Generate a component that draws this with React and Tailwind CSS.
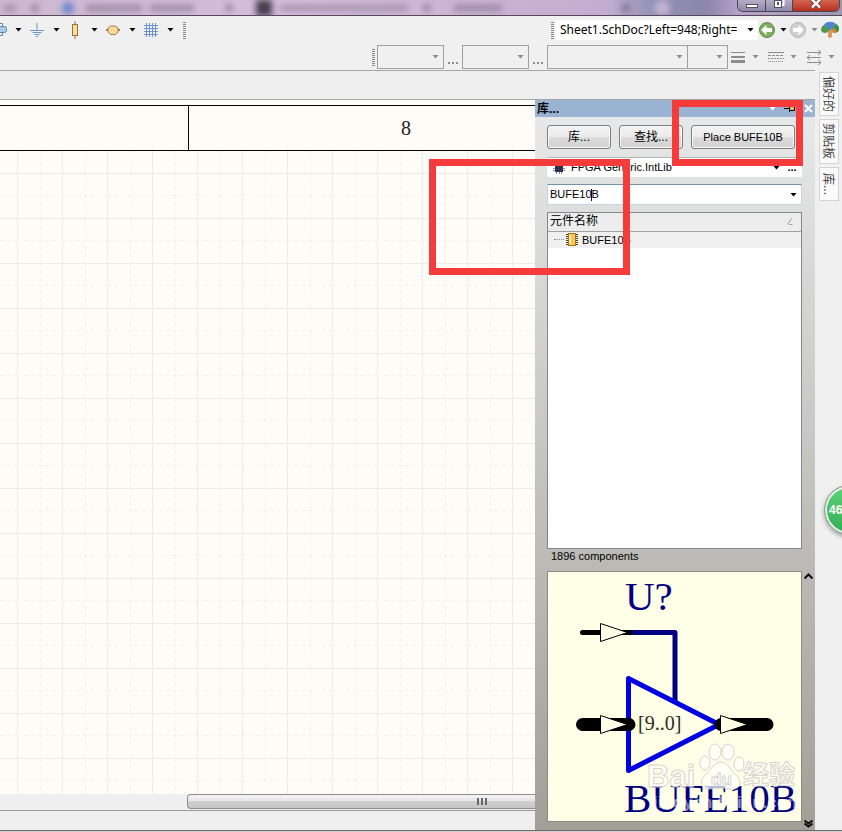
import React, { useState } from 'react';

const Caret = ({ className = 'text-black' }) => (
  <svg className={`shrink-0 ${className}`} width="7" height="4" viewBox="0 0 7 4" fill="currentColor" aria-hidden="true">
    <path d="M0.5 0h6L3.5 3.6z" />
  </svg>
);

const Grip = () => (
  <div className="w-[3px] h-[17px] shrink-0 bg-[repeating-linear-gradient(to_bottom,#8a8a8a_0,#8a8a8a_1px,transparent_1px,transparent_2px)]" />
);

const PortIcon = () => (
  <svg width="16" height="16" viewBox="0 0 16 16" fill="none" stroke="#5f87ad">
    <path d="M5.5 5V1.5h6V5M5.500 10v3.500h6V10" fill="#eef5fb" />
    <rect x="1.500" y="4.500" width="14" height="6" rx="2" fill="#a9cbe8" />
  </svg>
);

const GroundIcon = () => (
  <svg width="16" height="16" viewBox="0 0 16 16" stroke="#6c96c8">
    <path d="M8 1v7.500M1 8.500h14M3.500 10.500h9M5.500 12.500h5M7 14.500h2" />
  </svg>
);

const ResistorIcon = () => (
  <svg width="16" height="18" viewBox="0 0 16 18" stroke="#96743c">
    <path d="M8 0v18" />
    <rect x="5.500" y="3.500" width="5" height="11" fill="#fbdc9b" />
  </svg>
);

const PartIcon = () => (
  <svg width="16" height="16" viewBox="0 0 16 16" stroke="#9a8457">
    <path d="M1 8h14" strokeWidth="2" />
    <path d="M5.500 4h5L13 6v4l-2.500 2.500h-5L3 10V6z" fill="#fbd893" />
  </svg>
);

const GridIcon = () => (
  <svg width="16" height="16" viewBox="0 0 16 16" stroke="#6d93c9">
    <path d="M3.500 1v14M6.500 1v14M9.500 1v14M12.500 1v14M1 3.500h14M1 6.500h14M1 9.500h14M1 12.500h14" />
  </svg>
);

const drawTools = [
  { name: 'Port', icon: <PortIcon /> },
  { name: 'Power', icon: <GroundIcon /> },
  { name: 'Resistor', icon: <ResistorIcon /> },
  { name: 'Part', icon: <PartIcon /> },
  { name: 'Grid', icon: <GridIcon /> },
];

const Arrow = ({ dir, color, ring }) => (
  <svg width="18" height="18" viewBox="0 0 18 18" aria-hidden="true">
    <circle cx="9" cy="9" r="7.500" fill={color} stroke={ring} />
    <path
      d={dir === 'left' ? 'M3 9l5.500-5v3H14v4H8.500v3z' : 'M15 9L9.500 4v3H4v4h5.500v3z'}
      fill="#fff"
    />
  </svg>
);

function TitleBar() {
  return (
    <header className="relative h-4 overflow-hidden border-b border-[#55485a] bg-[linear-gradient(to_right,#cdb8cf_0%,#d3bddb_35%,#c3add0_72%,#8f8fb5_78%,#8d86ad_84%,#b9a4c9_88%,#9c97ae_100%)]">
      <div className="flex h-full items-center blur-[3px]" aria-hidden="true">
        <span className="ml-1 h-1.5 w-3 bg-[#9c8da3]" />
        <span className="ml-4 size-1.5 bg-[#857390]" />
        <span className="ml-6 size-3 rounded-full bg-[#6583cf]" />
        <span className="ml-3 h-1.5 w-14 bg-[#9886a0]" />
        <span className="ml-2 h-1.5 w-11 bg-[#9886a0]" />
        <span className="ml-8 size-1.5 bg-[#857390]" />
        <span className="ml-6 size-4 bg-[#463d4b]" />
        <span className="ml-2 h-1.5 w-32 bg-[#a590ad]" />
        <span className="ml-4 size-1.5 bg-[#857390]" />
        <span className="ml-6 h-1.5 w-12 bg-[#9784a2]" />
        <span className="ml-30 size-2 bg-[#857390]" />
        <span className="ml-6 size-4 rounded-full bg-[#c2b3cf]" />
      </div>
      <div className="absolute right-0.5 top-0 flex h-3 overflow-hidden rounded-b-md border border-t-0 border-[#4c4558]">
        <button aria-label="Minimize" className="flex w-7 items-center justify-center border-r border-[#4c4558] bg-linear-to-b from-[#b4aec4] to-[#8d88a5]">
          <span className="h-1 w-3 border border-[#55506a] bg-white" />
        </button>
        <button aria-label="Restore" className="flex w-[27px] items-start justify-center border-r border-[#4c4558] bg-linear-to-b from-[#b4aec4] to-[#8d88a5]">
          <svg width="12" height="9" viewBox="0 0 12 9" fill="none">
            <path d="M4.500 0v-1h6v6h-2" stroke="#fff" strokeWidth="2" />
            <rect x="1.500" y="0.500" width="7" height="7" fill="#fff" stroke="#55506a" />
            <rect x="4" y="2" width="2" height="3" fill="#55506a" />
          </svg>
        </button>
        <button aria-label="Close" className="flex w-[46px] items-start justify-center bg-linear-to-b from-[#d0654f] to-[#b82c1c]">
          <svg width="12" height="9" viewBox="0 0 12 9">
            <path d="M1.500-1L10 7.500M10.500-1L2 7.500" stroke="#5d3038" strokeWidth="4" />
            <path d="M1.500-1L10 7.500M10.500-1L2 7.500" stroke="#fff" strokeWidth="2.500" />
          </svg>
        </button>
      </div>
    </header>
  );
}

function MainToolbar() {
  const [path, setPath] = useState('Sheet1.SchDoc?Left=948;Right=');
  return (
    <div className="flex h-7 items-center justify-between">
      <div className="-ml-[11px] flex items-center">
        {drawTools.map((tool) => (
          <button key={tool.name} aria-label={tool.name} className="flex w-[38px] items-center">
            <span className="flex w-5 justify-center">{tool.icon}</span>
            <span className="flex w-[18px] justify-center"><Caret /></span>
          </button>
        ))}
        <div className="ml-1"><Grip /></div>
      </div>
      <div className="flex items-center pr-0.5">
        <Grip />
        <label className="ml-0.5 flex h-5 items-center bg-white pl-1">
          <input
            aria-label="Document address"
            value={path}
            onChange={(e) => setPath(e.target.value)}
            className="w-[182px] bg-transparent font-['Noto_Sans',sans-serif] text-[12px] text-black outline-none"
          />
          <span className="flex w-4 justify-center"><Caret /></span>
        </label>
        <button aria-label="Back" className="flex items-center gap-1">
          <Arrow dir="left" color="#7fae5c" ring="#5c8a48" />
          <Caret />
        </button>
        <button aria-label="Forward" className="ml-0.5 flex items-center gap-1">
          <Arrow dir="right" color="#cfcfcf" ring="#b5b5b5" />
          <Caret className="text-[#8c8c8c]" />
        </button>
        <button aria-label="Navigate" className="ml-0.5 flex">
          <svg width="20" height="18" viewBox="0 0 20 18">
            <path d="M8 8h4v8l-2 1-2-1z" fill="#d79a5c" />
            <path d="M1 9c0-4 3-6 7-5l2 5-4 3c-3 0-5-1-5-3z" fill="#4f9a4b" />
            <path d="M4 4c2-4 9-4 12-1l-3 6-4-1z" fill="#4d86cf" />
            <path d="M12 8l4-5c3 1 4 5 2 8l-4 1z" fill="#3a9443" />
            <path d="M11 9l3-2 3 4-4 1z" fill="#d9803f" />
          </svg>
        </button>
      </div>
    </div>
  );
}

const Combo = ({ label, className }) => (
  <label className={`relative flex h-6 items-center justify-end border border-[#a0a0a0] ${className}`}>
    <select aria-label={label} className="absolute inset-0 size-full appearance-none bg-transparent">
      <option></option>
    </select>
    <span className="pr-1"><Caret className="text-[#8c8c8c]" /></span>
  </label>
);

const More = () => (
  <button aria-label="More" className="flex h-6 w-[18px] items-end justify-center gap-0.5 pb-[5px]">
    <i className="size-0.5 bg-[#8c8c8c]" />
    <i className="size-0.5 bg-[#8c8c8c]" />
    <i className="size-0.5 bg-[#8c8c8c]" />
  </button>
);

function FormatToolbar() {
  return (
    <div className="flex h-[26px] items-center justify-end overflow-hidden">
      <Grip />
      <Combo label="X location" className="ml-0.5 w-[67px]" />
      <More />
      <Combo label="Y location" className="w-[67px]" />
      <More />
      <Combo label="Font" className="w-[141px]" />
      <Combo label="Font size" className="-ml-px w-[41px]" />
      <div className="-mr-0.5 ml-0.5 flex text-[#8c8c8c]">
        <button aria-label="Line width" className="flex w-[38px] items-center gap-1.5">
          <svg width="16" height="14" viewBox="0 0 16 14" fill="currentColor">
            <path d="M1 2h14v1H1zM1 6h14v2H1zM1 10h14v3H1z" />
          </svg>
          <Caret className="text-[#8c8c8c]" />
        </button>
        <button aria-label="Line style" className="flex w-[38px] items-center gap-1.5">
          <svg width="16" height="14" viewBox="0 0 16 14" stroke="currentColor">
            <path d="M0 2.500h16" />
            <path d="M0 5.500h16" strokeDasharray="3 1" />
            <path d="M0 8.500h16" strokeDasharray="2 1" />
            <path d="M0 11.500h16" strokeDasharray="1 1" />
          </svg>
          <Caret className="text-[#8c8c8c]" />
        </button>
        <button aria-label="Arrow style" className="flex w-[38px] items-center gap-1.5">
          <svg width="16" height="16" viewBox="0 0 16 16" fill="none" stroke="currentColor">
            <path d="M1 3.500h14M12 1l3 2.500L12 6M1 8.500h14M4 6L1 8.500 4 11M1 13.500h14M12 11l3 2.500-3 2.500" />
          </svg>
          <Caret className="text-[#8c8c8c]" />
        </button>
      </div>
    </div>
  );
}

function Sheet() {
  return (
    <main className="flex min-w-0 flex-1 flex-col bg-[#fffcf7]">
      <div className="mt-[5px] flex h-[46px] border-y border-black font-['Liberation_Serif',serif] text-[20px] text-[#222]">
        <div className="w-[189px] border-r border-black" />
        <div className="flex flex-1 items-center justify-center pl-[88px]">8</div>
      </div>
      <svg className="h-px w-full flex-1" aria-hidden="true">
        <defs>
          <pattern id="grid" x="17" y="22" width="45" height="45" patternUnits="userSpaceOnUse">
            <path d="M0.500 0v45M0 0.500h45" stroke="#ecebe6" />
            <path d="M23.500 0v45M0 22.500h45" stroke="#f3f1ec" strokeDasharray="4 3" />
          </pattern>
        </defs>
        <rect width="100%" height="100%" fill="url(#grid)" />
      </svg>
      <div className="flex h-[17px] border-b border-[#9a9a9a] bg-[#efefef]">
        <div className="w-[187px]" />
        <div className="flex h-[15px] flex-1 items-center justify-end rounded-l-sm border border-r-0 border-[#8e8e8e] bg-[linear-gradient(to_bottom,#f4f4f4_0,#e6e6e6_45%,#cfcfcf_50%,#c6c6c6_100%)] pr-12">
          <div className="flex gap-0.5">
            <i className="h-[7px] w-0.5 bg-[#666]" />
            <i className="h-[7px] w-0.5 bg-[#666]" />
            <i className="h-[7px] w-0.5 bg-[#666]" />
          </div>
        </div>
      </div>
      <div className="h-[19px] bg-[#efefef]" />
    </main>
  );
}

const buttonClass =
  'h-6 rounded-[3px] border border-[#7d7d7d] bg-[linear-gradient(to_bottom,#f3f3f3_0,#ebebeb_50%,#dcdcdc_50%,#d0d0d0_100%)] text-black shadow-[inset_0_0_0_1px_#fafafa]';

const ChipIcon = () => (
  <svg width="12" height="13" viewBox="0 0 12 13" aria-hidden="true">
    <path d="M0 1.500h12M0 3.500h12M0 5.500h12M0 7.500h12M0 9.500h12M0 11.500h12" stroke="#5c4310" />
    <rect x="2.500" y="0.500" width="7" height="12" fill="#f5c65c" stroke="#a67717" />
    <path d="M4 2v9" stroke="#fdeab5" strokeWidth="2" />
  </svg>
);

function Preview() {
  return (
    <svg className="block w-full" viewBox="0 0 253 249" fontFamily="'Liberation Serif', serif">
      <text x="77" y="38" fontSize="41" fill="#000080">U?</text>
      <path d="M34.500 60.500H84" stroke="#000" strokeWidth="5" strokeLinecap="round" />
      <path d="M84 60.500h43V130" fill="none" stroke="#000080" strokeWidth="5" strokeLinejoin="round" />
      <path d="M80.500 106.500v92L171 152.500z" fill="none" stroke="#0000e0" strokeWidth="5" strokeLinejoin="round" />
      <path d="M34.500 152.500H81M173 152.500h46" stroke="#000" strokeWidth="13" strokeLinecap="round" />
      <g fill="#ffffe8" stroke="#000">
        <path d="M52.500 51.500v18l27-9z" />
        <path d="M52.500 143.500v18l27-9z" />
        <path d="M172.500 143.500v18l27-9z" />
      </g>
      <text x="90" y="158" fontSize="20" fill="#2c2c20">[9..0]</text>
      <text x="76" y="240" fontSize="41" fill="#000080">BUFE10B</text>
      <g fill="#fff" fillOpacity="0.7" stroke="#c9c9c4" strokeOpacity="0.8" fontFamily="'Liberation Sans', 'Noto Sans CJK SC', sans-serif" fontWeight="bold">
        <text x="99" y="215" fontSize="31">Bai</text>
        <ellipse cx="157" cy="191" rx="5" ry="7" />
        <ellipse cx="167" cy="180" rx="6" ry="8" />
        <ellipse cx="180" cy="180" rx="6" ry="8" />
        <ellipse cx="191" cy="192" rx="5" ry="7" />
        <path d="M173 190c7 0 9 8 15 13 7 6 4 14-3 14-5 0-7-1-12-1s-8 1-13 1c-7 0-9-8-3-14 7-5 8-13 16-13z" />
        <text x="163" y="213" fontSize="17">du</text>
        <text x="195" y="212" fontSize="26">经验</text>
        <text x="105" y="236" fontSize="17" fillOpacity="0.5" strokeOpacity="0">jingyan.baidu.com</text>
      </g>
    </svg>
  );
}

function LibraryPanel() {
  const [filter, setFilter] = useState('BUFE10B');
  return (
    <aside className="relative flex w-[280px] shrink-0 flex-col bg-linear-to-b from-[#e9eaeb] to-[#a19f98] font-['Liberation_Sans','Noto_Sans_CJK_SC',sans-serif] text-[11px] text-black">
      <div className="flex h-[17px] items-center justify-between bg-[#9ab3d2] px-0.5">
        <h2 className="text-[12px] font-bold">库...</h2>
        <div className="flex items-center gap-2">
          <Caret className="text-white" />
          <button aria-label="Pin panel">
            <svg className="block" width="12" height="9" viewBox="0 0 12 9">
              <path d="M0 4.500h5M5.500 1v7" stroke="#000" />
              <path d="M5.500 2.500h5v4h-5z" fill="#e8b65a" stroke="#000" />
            </svg>
          </button>
          <button aria-label="Close panel">
            <svg className="block" width="9" height="9" viewBox="0 0 9 9">
              <path d="M1 1l7 7M8 1L1 8" stroke="#fff" strokeWidth="2" />
            </svg>
          </button>
        </div>
      </div>

      <div className="flex flex-col pl-3 pr-[13px]">
        <div className="mt-2 flex gap-2">
          <button className={`w-16 text-[12px] ${buttonClass}`}>库...</button>
          <button className={`w-16 text-[12px] ${buttonClass}`}>查找...</button>
          <button className={`w-[104px] ${buttonClass}`}>Place BUFE10B</button>
        </div>

        <div className="mt-2 flex h-5 items-center border-t border-[#b5b5b5] bg-white pl-1.5">
          <svg width="12" height="12" viewBox="0 0 12 12" aria-hidden="true">
            <path d="M3.500 0v12M6.500 0v12M8.500 0v12M0 3.500h12M0 6.500h12M0 8.500h12" stroke="#8890a8" />
            <rect x="2" y="2" width="8" height="8" fill="#2c3350" />
          </svg>
          <div className="relative ml-1.5 flex-1">
            <select aria-label="Library" className="w-full appearance-none bg-transparent">
              <option>FPGA Generic.IntLib</option>
            </select>
            <Caret className="absolute right-0.5 top-1/2 -translate-y-1/2" />
          </div>
          <button aria-label="Library options" className="w-5 font-bold">...</button>
        </div>

        <label className="relative mt-[7px] flex h-[21px] items-center border border-[#c4d5e2] border-t-[#6f93ad] bg-white pl-0.5 pr-1">
          <input
            aria-label="Filter"
            value={filter}
            onChange={(e) => setFilter(e.target.value)}
            className="min-w-0 flex-1 bg-transparent outline-none"
          />
          <span className="absolute left-[43px] top-1 h-3 w-px bg-[#000060]" />
          <Caret />
        </label>

        <div className="mt-[7px] h-[337px] border border-[#828790] bg-white">
          <table className="w-full border-collapse">
            <thead>
              <tr className="h-[18px] border-b border-[#a0a0a0] bg-[#ededed]">
                <th className="p-0 pl-0.5 text-left text-[12px] leading-[17px] font-normal">
                  <span className="flex items-center justify-between pr-2">
                    元件名称
                    <svg width="6" height="7" viewBox="0 0 6 7" stroke="#999" fill="none">
                      <path d="M0.500 6.500L4.500 0.500M2.500 6.500h3" />
                    </svg>
                  </span>
                </th>
              </tr>
            </thead>
            <tbody>
              <tr className="h-4 bg-[#f0f0f0]">
                <td className="p-0 pl-1.5 leading-4">
                  <span className="flex items-center">
                    <span className="mr-0.5 w-2.5 border-b border-dotted border-[#888]" />
                    <ChipIcon />
                    <span className="ml-1">BUFE10B</span>
                  </span>
                </td>
              </tr>
            </tbody>
          </table>
        </div>

        <p className="pl-1 leading-[15px]">1896 components</p>

        <div className="mt-[7px] border border-[#8c8b80] bg-[#ffffe8]">
          <Preview />
        </div>
      </div>

      <svg className="absolute right-0.5 top-[473px]" width="9" height="7" viewBox="0 0 9 7" fill="none" stroke="#111" strokeWidth="2">
        <path d="M0.500 5.500l4-4 4 4" />
      </svg>
      <svg className="absolute right-0.5 bottom-0.5" width="9" height="8" viewBox="0 0 9 8" fill="none" stroke="#111" strokeWidth="2">
        <path d="M0.500 0.500l4 3 4-3M0.500 3.500l4 3 4-3" />
      </svg>

      {/* callouts around the place button and the filter */}
      <div className="pointer-events-none absolute right-3 top-0 h-[66px] w-[131px] border-[7px] border-[#f63b3b]" />
      <div className="pointer-events-none absolute -left-[106px] top-[59px] h-[116px] w-[201px] border-[7px] border-[#f63b3b]" />
    </aside>
  );
}

const sideTabs = [
  { label: '偏好的', size: 'h-11' },
  { label: '剪贴板', size: 'h-[45px]' },
  { label: '库...', size: 'h-[34px]' },
];

export default function App() {
  return (
    <div className="relative flex min-h-screen flex-col overflow-hidden bg-[#f0f0f0]">
      <TitleBar />
      <MainToolbar />
      <FormatToolbar />
      <div className="flex flex-1">
        <div className="flex min-w-0 flex-1 flex-col">
          <div className="h-[30px] border-y border-[#a5a5a5] bg-[#efefef]" />
          <div className="flex flex-1">
            <Sheet />
            <LibraryPanel />
          </div>
        </div>
        <nav className="flex w-[27px] shrink-0 flex-col items-center gap-[3px] pt-0.5 font-['Noto_Sans_CJK_SC',sans-serif] text-[12px] leading-[18px] text-[#444]">
          {sideTabs.map((tab) => (
            <button
              key={tab.label}
              className={`flex w-5 items-center justify-center border border-[#d4d4d4] bg-[#fafafa] ${tab.size}`}
            >
              <span className="whitespace-nowrap [writing-mode:vertical-rl] [text-orientation:sideways]">{tab.label}</span>
            </button>
          ))}
        </nav>
      </div>
      <div className="h-0.5 border-t border-[#6e6e6e] bg-[#d0d0d0]" />

      <button className="absolute -right-8 top-[485px] size-[50px] rounded-full border border-[#8f9a92] bg-linear-to-b from-[#5fd07c] to-[#2fae50] pl-1 text-left font-['Liberation_Sans',sans-serif] text-[12px] font-bold text-white shadow-[inset_0_0_0_2px_#e9f4ec,0_2px_4px_#999]">
        46
      </button>
    </div>
  );
}
